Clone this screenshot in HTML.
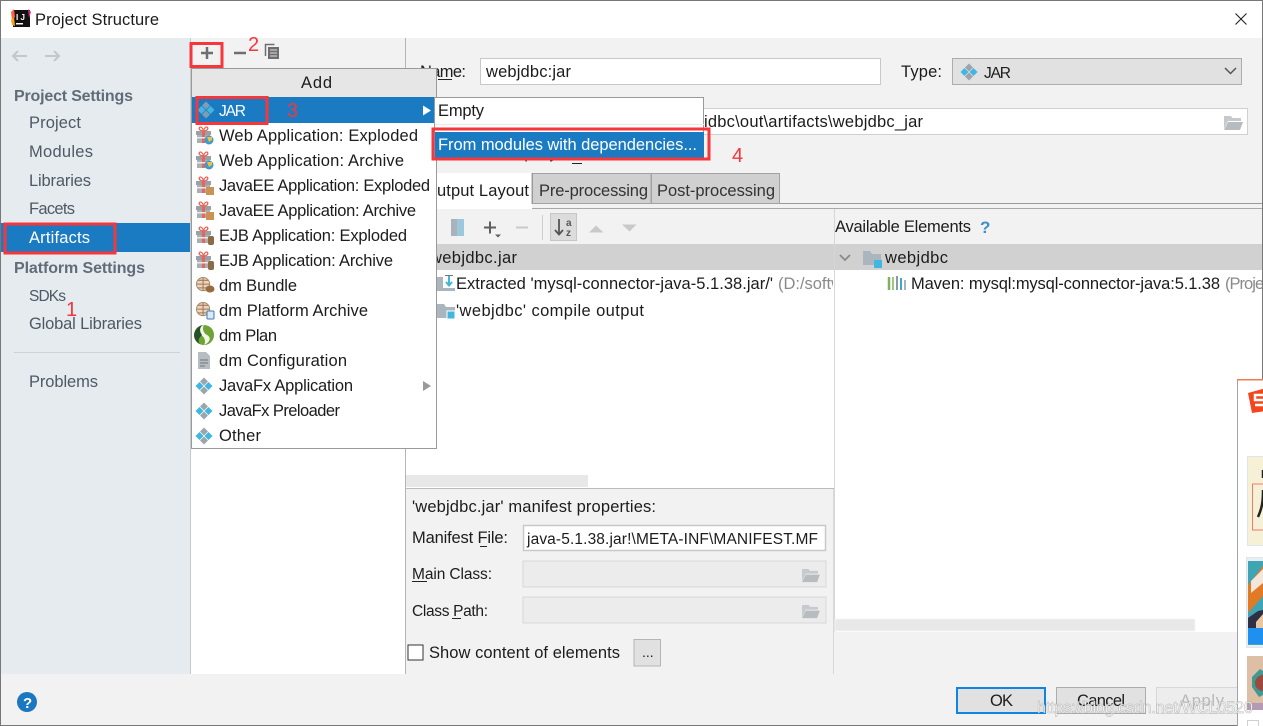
<!DOCTYPE html>
<html><head><meta charset="utf-8"><title>Project Structure</title>
<style>
html,body{margin:0;padding:0;background:#fff;overflow:hidden}
svg{display:block}
text{font-family:"Liberation Sans","Noto Sans CJK SC",sans-serif;font-size:16.5px;fill:#1c1c1c;white-space:pre}
.n{font-size:15.5px}
.s{fill:#4f5964}
.b{font-weight:bold;fill:#626c78;font-size:16px}
.g{fill:#8a8a8a}
.w{fill:#fff}
.r{fill:#f5363a;font-size:20px}
</style></head><body>
<svg width="1263" height="726" viewBox="0 0 1263 726" xmlns="http://www.w3.org/2000/svg">
<defs>
<symbol id="dia" viewBox="0 0 18 18" overflow="visible">
<path d="M9 0.5l4 4-4 4-4-4z" fill="#9da5ac"/><path d="M9 9.5l4 4-4 4-4-4z" fill="#9da5ac"/>
<path d="M4.5 5l4 4-4 4-4-4z" fill="#40b6e0"/><path d="M13.5 5l4 4-4 4-4-4z" fill="#40b6e0"/>
</symbol>
<symbol id="diaS" viewBox="0 0 18 18" overflow="visible">
<path d="M9 0.5l4 4-4 4-4-4z" fill="#7e9db5"/><path d="M9 9.5l4 4-4 4-4-4z" fill="#7e9db5"/>
<path d="M4.5 5l4 4-4 4-4-4z" fill="#40b6e0"/><path d="M13.5 5l4 4-4 4-4-4z" fill="#40b6e0"/>
</symbol>
<symbol id="gift" viewBox="0 0 18 18" overflow="visible">
<rect x="0" y="5" width="15" height="4" fill="#9aa1a6"/><rect x="1" y="9" width="13" height="8" fill="#a9afb3"/>
<rect x="6" y="5" width="3" height="12" fill="#e9645b"/><rect x="1" y="11" width="13" height="1.5" fill="#e9e9e9"/>
<path d="M7.5 5C4 5 2.500 3 3.500 1.500S7 2 7.500 5C8 2 10.500 0 11.500 1.500S11 5 7.500 5z" fill="none" stroke="#e9645b" stroke-width="1.300"/>
</symbol>
<symbol id="globe" viewBox="0 0 18 18" overflow="visible">
<circle cx="7.500" cy="7.500" r="7" fill="#e8d6bd" stroke="#a58a68"/>
<path d="M0.500 7.500h14M7.500 0.500v14M2 3.500h11M2 11.500h11" stroke="#a5775a" stroke-width="1.100" fill="none"/>
</symbol>
<symbol id="folder" viewBox="0 0 18 16" overflow="visible">
<path d="M0 1h7l2 3h9v11H0z" fill="#aab5bd"/>
</symbol>
<symbol id="open" viewBox="0 0 20 16" overflow="visible">
<path d="M1 1h7l1.500 2H18v3H5L1 14z" fill="#c6cace"/><path d="M5 7h15l-3 8H1z" fill="#b7bcc0"/>
</symbol>
<clipPath id="cInc"><rect x="436" y="160" width="400" height="10"/></clipPath>
<clipPath id="cLeft"><rect x="437" y="240" width="396" height="85"/></clipPath>
<clipPath id="cRight"><rect x="836" y="270" width="427" height="40"/></clipPath>
<clipPath id="cSide"><rect x="1238" y="381" width="25" height="345"/></clipPath>
</defs>

<!-- window -->
<rect x="0" y="0" width="1263" height="726" fill="#f2f2f2"/>
<rect x="0" y="0" width="1263" height="38" fill="#fff"/>
<rect x="1" y="38" width="189" height="636" fill="#e6ebf0"/>
<rect x="190" y="38" width="215" height="636" fill="#f2f2f2"/>
<rect x="191" y="68" width="214" height="606" fill="#fff"/>
<rect x="190" y="38" width="1" height="636" fill="#c9c9c9"/>
<rect x="405" y="38" width="1" height="636" fill="#b5b5b5"/>

<!-- title -->
<rect x="13" y="10" width="17" height="17" fill="#111"/>
<path d="M11 12l3-3 1 8-3 3z" fill="#f9653a"/><path d="M11 20l3-3 1 9-3-1z" fill="#f7a21c"/><path d="M28 9l3 3-2 6z" fill="#dd2a80"/>
<rect x="16" y="23" width="7" height="1.500" fill="#fff"/>
<text x="16" y="20" style="font-size:8px;font-weight:bold;fill:#fff" textLength="9">IJ</text>
<text x="35" y="25" textLength="124" lengthAdjust="spacing">Project Structure</text>
<path d="M1235.500 13.500l11 11M1246.500 13.500l-11 11" stroke="#222" stroke-width="1.100" fill="none"/>

<!-- sidebar -->
<path d="M27 56H13m5-5l-5 5 5 5" fill="none" stroke="#c5c8cb" stroke-width="2"/>
<path d="M45 56h14m-5-5l5 5-5 5" fill="none" stroke="#c5c8cb" stroke-width="2"/>
<text x="14" y="101" class="b" textLength="119">Project Settings</text>
<text x="29" y="128" class="s" textLength="52">Project</text>
<text x="29" y="157" class="s" textLength="64">Modules</text>
<text x="29" y="186" class="s" textLength="62">Libraries</text>
<text x="29" y="214" class="s" textLength="46">Facets</text>
<rect x="1" y="223" width="189" height="29" fill="#1a7bc3"/>
<text x="29" y="243" class="w" textLength="61">Artifacts</text>
<text x="14" y="273" class="b" textLength="131">Platform Settings</text>
<text x="29" y="301" class="s n" textLength="37">SDKs</text>
<text x="29" y="329" class="s" textLength="113">Global Libraries</text>
<rect x="14" y="352" width="166" height="1" fill="#cfd3d7"/>
<text x="29" y="387" class="s" textLength="69">Problems</text>
<circle cx="27" cy="702" r="10" fill="#1b78c0"/>
<text x="23" y="708" style="font-size:15px;font-weight:bold;fill:#fff">?</text>

<!-- middle toolbar -->
<path d="M207 47v12M201 53h12" stroke="#6e6e6e" stroke-width="2.500" fill="none"/>
<path d="M234 53h12" stroke="#6e6e6e" stroke-width="2.500" fill="none"/>
<path d="M265.500 56V44.500h9" fill="none" stroke="#6e6e6e" stroke-width="1.500"/>
<rect x="268" y="47" width="11" height="12" fill="#6e6e6e"/>
<path d="M270 50h7M270 53h7M270 56h7" stroke="#ddd" stroke-width="1"/>

<!-- form -->
<text x="420" y="77" textLength="46">Name:</text>
<rect x="438" y="79" width="14" height="1" fill="#222"/>
<rect x="480.500" y="58.500" width="400" height="26" fill="#fff" stroke="#c8c8c8"/>
<text x="486" y="77" textLength="85">webjdbc:jar</text>
<text x="901" y="77" textLength="41">Type:</text>
<rect x="952.500" y="58.500" width="289" height="26" fill="#e1e1e1" stroke="#adadad"/>
<use href="#dia" x="960" y="63" width="18" height="18"/>
<text x="984" y="78" class="n" textLength="27">JAR</text>
<path d="M1225 68l5.500 5.500 5.500-5.500" fill="none" stroke="#555" stroke-width="1.500"/>
<rect x="600.500" y="108.500" width="647" height="26" fill="#fff" stroke="#d0d0d0"/>
<text x="704" y="127" textLength="219">idbc\out\artifacts\webjdbc_jar</text>
<use href="#open" x="1223" y="115" width="20" height="16"/>
<text x="440" y="158" clip-path="url(#cInc)" textLength="183">Include in project build</text>
<rect x="572" y="163" width="10" height="1" fill="#222"/>

<!-- tabs -->
<rect x="406" y="203" width="857" height="1" fill="#999"/>
<rect x="406" y="208" width="857" height="1" fill="#a8a8a8"/>
<rect x="406" y="173" width="126" height="36" fill="#fff"/>
<rect x="532" y="173.500" width="119" height="30" fill="#d0d0d0" stroke="#a3a3a3"/>
<rect x="651.500" y="173.500" width="128" height="30" fill="#d0d0d0" stroke="#a3a3a3"/>
<rect x="406" y="204" width="126" height="4" fill="#fff"/>
<rect x="532" y="173" width="1" height="31" fill="#999"/>
<text x="437" y="196" textLength="92">utput Layout</text>
<text x="539" y="196" textLength="109" style="fill:#333">Pre-processing</text>
<text x="657" y="196" textLength="118" style="fill:#333">Post-processing</text>

<!-- output layout area -->
<rect x="406" y="209" width="428" height="35" fill="#f2f2f2"/>
<rect x="835" y="209" width="428" height="35" fill="#f2f2f2"/>
<rect x="406" y="270" width="428" height="218" fill="#fff"/>
<rect x="835" y="270" width="428" height="362" fill="#fff"/>
<rect x="406" y="244" width="428" height="26" fill="#d1d1d1"/>
<rect x="835" y="244" width="428" height="26" fill="#d1d1d1"/>
<rect x="834" y="209" width="1" height="423" fill="#d6d6d6"/>
<rect x="406" y="475" width="182" height="12" fill="#e8e8e8"/>
<rect x="406" y="488" width="428" height="1" fill="#bcbcbc"/>
<rect x="835" y="619" width="360" height="12" fill="#e8e8e8" stroke="#f5f5f5"/>
<rect x="833" y="489" width="1" height="185" fill="#d8d8d8"/>

<!-- tree toolbar -->
<rect x="451" y="219" width="6" height="17" fill="#a8b3ba"/><rect x="457" y="219" width="7" height="17" fill="#9cc8dd"/>
<path d="M484 227.500h12M490 221.500v12" stroke="#5f5f5f" stroke-width="2" fill="none"/>
<path d="M495 234.500h6l-3 3z" fill="#5f5f5f"/>
<path d="M516 227.500h12" stroke="#c9c9c9" stroke-width="2" fill="none"/>
<rect x="542" y="215" width="1" height="25" fill="#cfcfcf"/>
<rect x="550.500" y="213.500" width="26" height="27" fill="#dcdcdc" stroke="#c6c6c6"/>
<path d="M559 219v15m-4-4l4 4.500 4-4.500" stroke="#555" stroke-width="1.800" fill="none"/>
<text x="566" y="226" style="font-size:10px;font-weight:bold;fill:#555">a</text>
<text x="566" y="236" style="font-size:10px;font-weight:bold;fill:#555">z</text>
<path d="M589 232.500l7-7 7.500 7z" fill="#c9c9c9"/>
<path d="M622 224.500h14.500l-7 7z" fill="#c9c9c9"/>
<text x="835" y="232" textLength="136">Available Elements</text>
<text x="980" y="233" style="font-weight:bold;font-size:17px;fill:#3d8fc6">?</text>

<!-- left tree -->
<g clip-path="url(#cLeft)">
<text x="430" y="263" textLength="87">webjdbc.jar</text>
<text x="456" y="289" textLength="317">Extracted 'mysql-connector-java-5.1.38.jar/'</text>
<text x="778" y="289" class="g" textLength="65">(D:/softw</text>
</g>
<use href="#folder" x="437" y="276" width="18" height="16"/>
<rect x="443" y="275" width="12" height="13" fill="#fff"/>
<path d="M449 276v9m-3-3l3 3.500 3-3.500" stroke="#40b6e0" stroke-width="2" fill="none"/>
<path d="M445 275.500h8" stroke="#777" stroke-width="1"/>
<use href="#folder" x="437" y="303" width="18" height="16"/>
<rect x="447" y="311" width="8" height="8" fill="#40b6e0" stroke="#fff"/>
<text x="456" y="316" textLength="188">'webjdbc' compile output</text>

<!-- right tree -->
<path d="M840 255l5 5 5-5" fill="none" stroke="#8a8a8a" stroke-width="1.800"/>
<use href="#folder" x="863" y="250" width="18" height="16"/>
<rect x="874" y="260" width="8" height="8" fill="#40b6e0"/>
<text x="885" y="263" textLength="63">webjdbc</text>
<path d="M889 277v13" stroke="#7fb25b" stroke-width="2.500"/><path d="M893 277v13" stroke="#7fb25b" stroke-width="1.500"/>
<path d="M897 276v14" stroke="#8d9aa3" stroke-width="2"/><path d="M901 278v12" stroke="#40a8d0" stroke-width="2"/><path d="M905 280v10" stroke="#8d9aa3" stroke-width="1.500"/>
<g clip-path="url(#cRight)">
<text x="911" y="289" textLength="309">Maven: mysql:mysql-connector-java:5.1.38</text>
<text x="1225" y="289" class="g" textLength="50">(Project</text>
</g>

<!-- manifest -->
<text x="412" y="512" textLength="244">'webjdbc.jar' manifest properties:</text>
<text x="412" y="543" textLength="96">Manifest File:</text>
<rect x="480" y="546" width="7" height="1" fill="#222"/>
<rect x="523.500" y="525.500" width="302" height="25" fill="#fff" stroke="#c8c8c8" stroke-width="1.500"/>
<text x="527" y="544" class="n" textLength="291">java-5.1.38.jar!\META-INF\MANIFEST.MF</text>
<text x="412" y="579" class="n" textLength="80">Main Class:</text>
<rect x="412" y="581" width="15" height="1" fill="#222"/>
<rect x="523" y="561" width="303" height="26" fill="#ececec" stroke="#d8d8d8"/>
<use href="#open" x="801" y="568" width="19" height="15"/>
<text x="412" y="616" class="n" textLength="76">Class Path:</text>
<rect x="452" y="618" width="9" height="1" fill="#222"/>
<rect x="523" y="597" width="303" height="26" fill="#ececec" stroke="#d8d8d8"/>
<use href="#open" x="801" y="604" width="19" height="15"/>
<rect x="408" y="645" width="15" height="15" fill="#fff" stroke="#333"/>
<text x="429" y="658" textLength="191">Show content of elements</text>
<rect x="634" y="639.500" width="26.500" height="26.500" fill="#e1e1e1" stroke="#b5b5b5"/>
<text x="642" y="657" style="font-size:14px">...</text>

<!-- bottom buttons -->
<rect x="957" y="688" width="88" height="25" fill="#e1e1e1" stroke="#0f85e0" stroke-width="2"/>
<text x="990" y="706" textLength="23">OK</text>
<rect x="1056.500" y="687.500" width="89" height="26" fill="#e1e1e1" stroke="#adadad"/>
<text x="1077" y="706" textLength="48">Cancel</text>
<rect x="1156.500" y="687.500" width="89" height="26" fill="#ededed" stroke="#d8d8d8"/>
<text x="1180" y="706" textLength="44" style="fill:#b8b8b8">Apply</text>

<!-- add menu -->
<rect x="191.500" y="68.500" width="245" height="380" fill="#fff" stroke="#9a9a9a"/>
<rect x="192" y="69" width="244" height="28" fill="#e6e6e6"/>
<text x="301" y="88" textLength="31">Add</text>
<rect x="192" y="97" width="244" height="26" fill="#1a7bc3"/>
<use href="#diaS" x="197" y="101" width="18" height="18"/>
<text x="219" y="116" class="w n" textLength="27">JAR</text>
<path d="M423 105.500l8 5-8 5z" fill="#fff"/>

<use href="#gift" x="196" y="126" width="18" height="18"/><circle cx="209" cy="140" r="4.500" fill="#3f9ad0"/><path d="M207 137h5v3l-3 2z" fill="#f2c23e"/>
<text x="219" y="141" textLength="199">Web Application: Exploded</text>
<use href="#gift" x="196" y="151" width="18" height="18"/><circle cx="209" cy="165" r="4.500" fill="#3f9ad0"/><path d="M207 162h5v3l-3 2z" fill="#f2c23e"/>
<text x="219" y="166" textLength="185">Web Application: Archive</text>
<use href="#gift" x="196" y="176" width="18" height="18"/><rect x="206" y="187" width="8" height="8" fill="#c99355"/>
<text x="219" y="191" textLength="211">JavaEE Application: Exploded</text>
<use href="#gift" x="196" y="201" width="18" height="18"/><rect x="206" y="212" width="8" height="8" fill="#c99355"/>
<text x="219" y="216" textLength="197">JavaEE Application: Archive</text>
<use href="#gift" x="196" y="226" width="18" height="18"/><rect x="208" y="236" width="6" height="9" rx="2" fill="#8a6b45"/>
<text x="219" y="241" textLength="188">EJB Application: Exploded</text>
<use href="#gift" x="196" y="251" width="18" height="18"/><rect x="208" y="261" width="6" height="9" rx="2" fill="#8a6b45"/>
<text x="219" y="266" textLength="174">EJB Application: Archive</text>
<use href="#globe" x="196" y="277" width="17" height="17"/><ellipse cx="210" cy="289" rx="4.500" ry="3.500" fill="#9a6a3c"/>
<text x="219" y="291" textLength="78">dm Bundle</text>
<use href="#globe" x="196" y="302" width="17" height="17"/><rect x="207" y="311" width="7" height="8" rx="1" fill="#dce8f5" stroke="#3f76b8"/>
<text x="219" y="316" textLength="149">dm Platform Archive</text>
<circle cx="204" cy="335" r="10" fill="#6ea336"/><path d="M204 325c-7 3-7 8-3 10s5 7 3 10c7-3 7-8 3-10s-5-7-3-10z" fill="#f4f6e8"/><path d="M194 335c1-6 4-8 8-10-3 4-2 7 0 10-3 3-5 6-2 9-3-1-6-5-6-9z" fill="#24502a"/>
<text x="219" y="341" textLength="58">dm Plan</text>
<path d="M198 352h8l4 4v13h-12z" fill="#b6bdc3"/><path d="M200 360h8M200 363h8M200 366h5" stroke="#6f777d" stroke-width="1"/>
<text x="219" y="366" textLength="128">dm Configuration</text>
<use href="#dia" x="195" y="377" width="18" height="18"/>
<text x="219" y="391" textLength="134">JavaFx Application</text>
<path d="M423 381l8 5-8 5z" fill="#9a9a9a"/>
<use href="#dia" x="195" y="402" width="18" height="18"/>
<text x="219" y="416" textLength="121">JavaFx Preloader</text>
<use href="#dia" x="195" y="427" width="18" height="18"/>
<text x="219" y="441" textLength="42">Other</text>

<!-- submenu -->
<rect x="434.500" y="97.500" width="269" height="60" fill="#fff" stroke="#9a9a9a"/>
<rect x="435" y="132" width="269" height="26" fill="#1a7bc3"/>
<rect x="435" y="124" width="269" height="1" fill="#e8e8e8"/>
<text x="438" y="116" textLength="46">Empty</text>
<text x="438" y="150" class="w" textLength="259">From modules with dependencies...</text>

<!-- red annotations -->
<g fill="none" stroke="#f5363a" stroke-width="3">
<rect x="191" y="43.500" width="31" height="23"/>
<rect x="5" y="224" width="110" height="29"/>
<rect x="197" y="97.500" width="70" height="26"/>
<rect x="433" y="129" width="276" height="30"/>
</g>
<text x="66" y="316" class="r">1</text>
<text x="248" y="51" class="r">2</text>
<text x="287" y="117" class="r">3</text>
<text x="732" y="162" class="r">4</text>

<!-- window border -->
<rect x="0.500" y="0.500" width="1262" height="725" fill="none" stroke="#777"/>

<!-- side panel -->
<rect x="1237" y="380" width="26" height="346" fill="#fff"/>
<rect x="1237" y="380" width="1" height="346" fill="#a0a4a8"/>
<rect x="1237" y="379" width="26" height="1.500" fill="#f47a50"/>
<g clip-path="url(#cSide)">
<path d="M1248 393l18-5v23l-14 2z" fill="#f4451c"/>
<path d="M1264 395h-9v5h9M1264 405h-9" stroke="#fff" stroke-width="2.500" fill="none"/>
<rect x="1247.500" y="456.500" width="20" height="89" fill="#f6f1d6" stroke="#dfe5ec"/>
<rect x="1252.500" y="484" width="14" height="46" fill="none" stroke="#ef7a70"/>
<path d="M1263 470v8M1263 490c0 12-1 18-5 27" stroke="#222" stroke-width="2.500" fill="none"/>
<rect x="1246.500" y="557.500" width="20" height="90" fill="#e9eef3" stroke="#dfe5ec"/>
<rect x="1248" y="561" width="15" height="84" fill="#3fa5b5"/>
<path d="M1248 585l15-19v30l-15 17z" fill="#e07a24"/>
<path d="M1251 581l12-12v14l-12 10z" fill="#f3e6dc"/>
<path d="M1248 618l10-7 5-1v18h-15z" fill="#2f2f45"/>
<path d="M1256 622l7-8v14h-7z" fill="#e8c8a0"/>
<rect x="1248" y="628" width="15" height="16" fill="#1e90ef"/>
<rect x="1247" y="656" width="16" height="54" fill="#dcbfa5"/>
<path d="M1252 677l8-8 3 2v24l-4 2-7-10z" fill="#3e9a92"/>
<circle cx="1263" cy="683" r="8" fill="#9c4a40"/>
<rect x="1247" y="703" width="16" height="7" fill="#b39bb5"/>
<rect x="1247.500" y="720.500" width="11" height="8" fill="#fff" stroke="#d0d0d0"/>
</g>

<!-- watermark -->
<text x="1037" y="713" textLength="216" style="font-size:16.5px;fill:#fff;fill-opacity:.85;stroke:#8c8c8c;stroke-opacity:.45;stroke-width:.7">https://blog.csdn.net/WCL0520</text>
</svg>
</body></html>
